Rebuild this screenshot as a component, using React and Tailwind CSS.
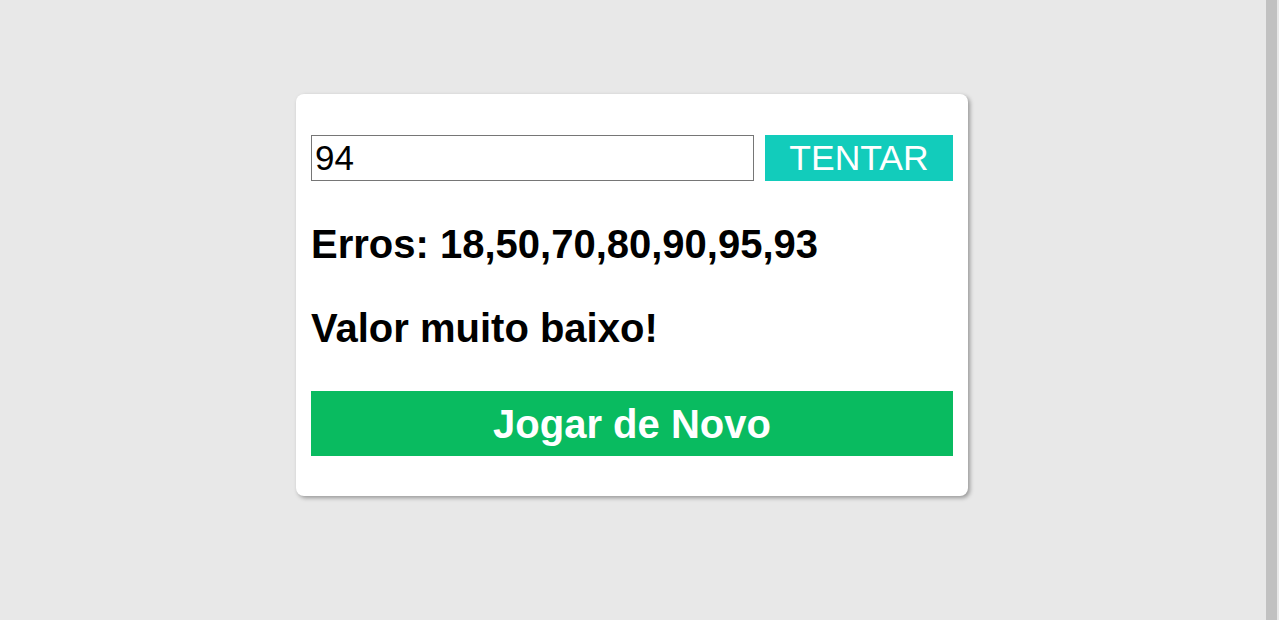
export default function App() {
  return (
    <div className="flex h-[620px] w-full bg-[#e8e8e8]" style={{ fontFamily: '"Liberation Sans", Arial, sans-serif' }}>
      <div className="flex flex-1 justify-center pt-[94px] pr-[2px]">
        <div className="flex h-[402px] w-[672px] flex-col rounded-[8px] bg-white px-[15px] pt-[41px] pb-[40px] shadow-[2px_2px_4px_rgba(0,0,0,0.35)]">
          <div className="flex h-[46px] gap-[11px]">
            <input
              readOnly
              value="94"
              className="h-[46px] w-[443px] border border-[#767676] bg-white pr-[2px] pl-[3px] text-[35px] leading-[40px] text-black outline-none"
              style={{ fontFamily: '"Liberation Sans", Arial, sans-serif' }}
            />
            <button className="h-[46px] flex-1 bg-[#12ccbb] text-[35.5px] leading-[46px] text-white">TENTAR</button>
          </div>
          <div className="mt-[40px] h-[46px] text-[40px] font-bold leading-[46px] text-black">Erros: 18,50,70,80,90,95,93</div>
          <div className="mt-[38px] h-[46px] text-[40px] font-bold leading-[46px] text-black">Valor muito baixo!</div>
          <button className="mt-[40px] h-[65px] w-full bg-[#09bb60] text-[40px] font-bold leading-[64px] text-white">Jogar de Novo</button>
        </div>
      </div>
      <div className="h-full w-[11px] bg-[#c1c1c1]" />
      <div className="h-full w-[2px] bg-[#e8e8e8]" />
    </div>
  );
}
